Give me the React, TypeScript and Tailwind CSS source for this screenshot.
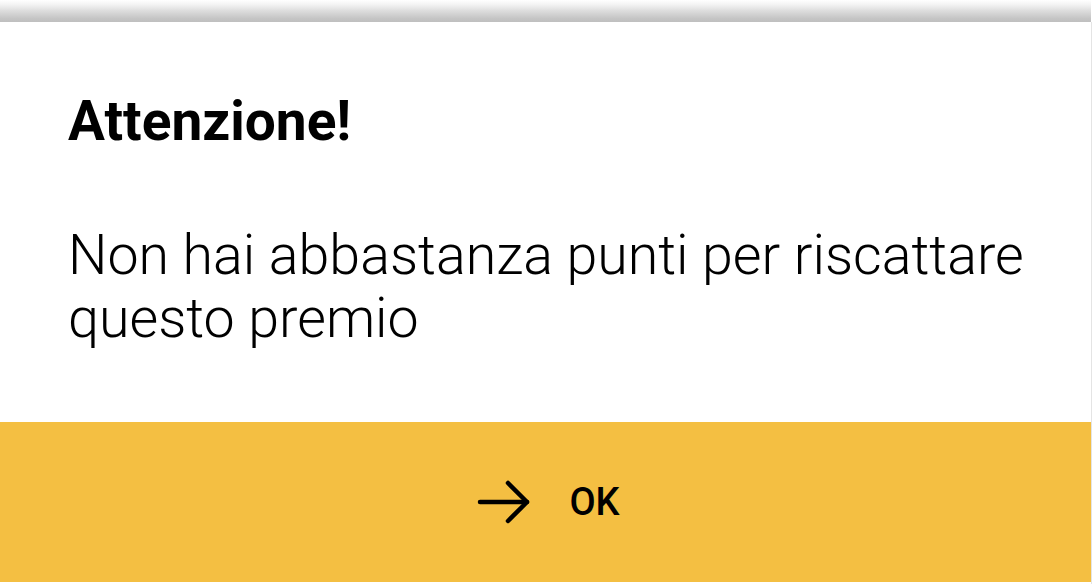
const App = () => {
  return (
    <div className="w-[1092px] h-[584px] bg-white flex flex-col overflow-hidden font-['Roboto',sans-serif]">
      {/* shadow of the bar above */}
      <div className="h-[22px] w-[1091px] bg-[linear-gradient(to_bottom,#ffffff_0%,#f4f4f4_20%,#dcdcdc_50%,#c4c4c4_85%,#bfbfbf_100%)]" />
      <div className="flex flex-1 flex-col w-[1091px] border-r border-[#e4e4e4] box-content">
        <div className="h-[400px] pl-[68px] pr-[40px] pt-[72px]">
          <h1 className="text-[55px] leading-none font-bold text-black">Attenzione!</h1>
          <p className="mt-[75px] text-[55.5px] leading-[63px] font-light text-black">
            Non hai abbastanza punti per riscattare questo premio
          </p>
        </div>
        <button className="h-[160px] bg-[#f4bf42] flex items-center justify-center gap-[38px] pl-[6px]">
          <svg width="54" height="46" viewBox="0 0 54 46" fill="none" stroke="#000" strokeWidth="4.5" strokeLinecap="round" strokeLinejoin="round">
            <path d="M3 23h47" />
            <path d="M31 4l19 19-19 19" />
          </svg>
          <span className="text-[38px] leading-none font-medium text-black">OK</span>
        </button>
      </div>
    </div>
  );
};

export default App;
